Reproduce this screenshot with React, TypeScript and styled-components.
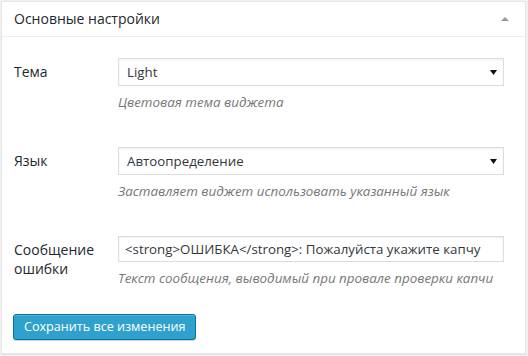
import styled, { createGlobalStyle } from 'styled-components';

const GlobalStyle = createGlobalStyle`
  html, body {
    margin: 0;
    padding: 0;
    background: #f1f1f1;
  }
  body {
    font-family: "Open Sans", "Noto Sans", sans-serif;
    color: #444;
  }
`;

const Page = styled.div`
  padding: 1px 2px 2px 1px;
`;

const Panel = styled.div`
  width: 525px;
  box-sizing: border-box;
  background: #fff;
  border: 1px solid #e5e5e5;
  box-shadow: 0 1px 1px rgba(0, 0, 0, 0.04);
`;

const Header = styled.div`
  height: 34px;
  display: flex;
  align-items: center;
  justify-content: space-between;
  padding: 0 16px 0 12px;
  border-bottom: 1px solid #eee;
`;

const Title = styled.h3`
  margin: 0;
  font-size: 14px;
  font-weight: 400;
  line-height: 1.4;
  color: #23282d;
`;

const Toggle = styled.span`
  width: 0;
  height: 0;
  border-left: 4px solid transparent;
  border-right: 4px solid transparent;
  border-bottom: 4px solid #999;
`;

const Body = styled.div`
  padding: 21px 21px 13px 11px;
  display: flex;
  flex-direction: column;
`;

const Row = styled.div`
  display: grid;
  grid-template-columns: 105px 386px;
  margin-bottom: 36px;

  &:last-of-type {
    margin-bottom: 27px;
  }
`;

const Label = styled.label`
  padding-top: 4px;
  padding-left: 1px;
  font-size: 14px;
  line-height: 19px;
  color: #23282d;
`;

const Field = styled.div`
  display: flex;
  flex-direction: column;
`;

const SelectBox = styled.div`
  height: 28px;
  box-sizing: border-box;
  display: flex;
  align-items: center;
  justify-content: space-between;
  padding: 0 6px 0 8px;
  border: 1px solid #ddd;
  box-shadow: inset 0 1px 2px rgba(0, 0, 0, 0.07);
  background: #fff;
  font-size: 13.3px;
  color: #32373c;
`;

const TextInput = styled.div`
  height: 26px;
  box-sizing: border-box;
  display: flex;
  align-items: center;
  padding: 0 6px;
  border: 1px solid #ddd;
  box-shadow: inset 0 1px 2px rgba(0, 0, 0, 0.07);
  background: #fff;
  font-size: 13.3px;
  color: #32373c;
  white-space: nowrap;
  overflow: hidden;
`;

const Description = styled.p`
  margin: 7px 0 0;
  font-size: 13.4px;
  line-height: 18px;
  font-style: italic;
  color: #777;
`;

const SaveButton = styled.button`
  align-self: flex-start;
  height: 26px;
  padding: 0 10px 1px;
  font-family: inherit;
  font-size: 12.6px;
  color: #fff;
  background: #2ea2cc;
  border: 1px solid #0074a2;
  border-radius: 3px;
  box-shadow: inset 0 1px 0 rgba(120, 200, 230, 0.5), 0 1px 0 rgba(0, 0, 0, 0.15);
  cursor: pointer;
`;

const Arrow = () => (
  <svg width="7" height="5" viewBox="0 0 7 5">
    <path d="M0 0h7L3.5 5z" fill="#111" />
  </svg>
);

const Select = ({ value }: { value: string }) => (
  <SelectBox>
    <span>{value}</span>
    <Arrow />
  </SelectBox>
);

const App = () => {
  return (
    <Page>
      <GlobalStyle />
      <Panel>
        <Header>
          <Title>Основные настройки</Title>
          <Toggle />
        </Header>
        <Body>
          <Row>
            <Label>Тема</Label>
            <Field>
              <Select value="Light" />
              <Description>Цветовая тема виджета</Description>
            </Field>
          </Row>
          <Row>
            <Label>Язык</Label>
            <Field>
              <Select value="Автоопределение" />
              <Description>Заставляет виджет использовать указанный язык</Description>
            </Field>
          </Row>
          <Row>
            <Label>Сообщение ошибки</Label>
            <Field>
              <TextInput>{'<strong>ОШИБКА</strong>: Пожалуйста укажите капчу'}</TextInput>
              <Description>Текст сообщения, выводимый при провале проверки капчи</Description>
            </Field>
          </Row>
          <SaveButton>Сохранить все изменения</SaveButton>
        </Body>
      </Panel>
    </Page>
  );
};

export default App;
